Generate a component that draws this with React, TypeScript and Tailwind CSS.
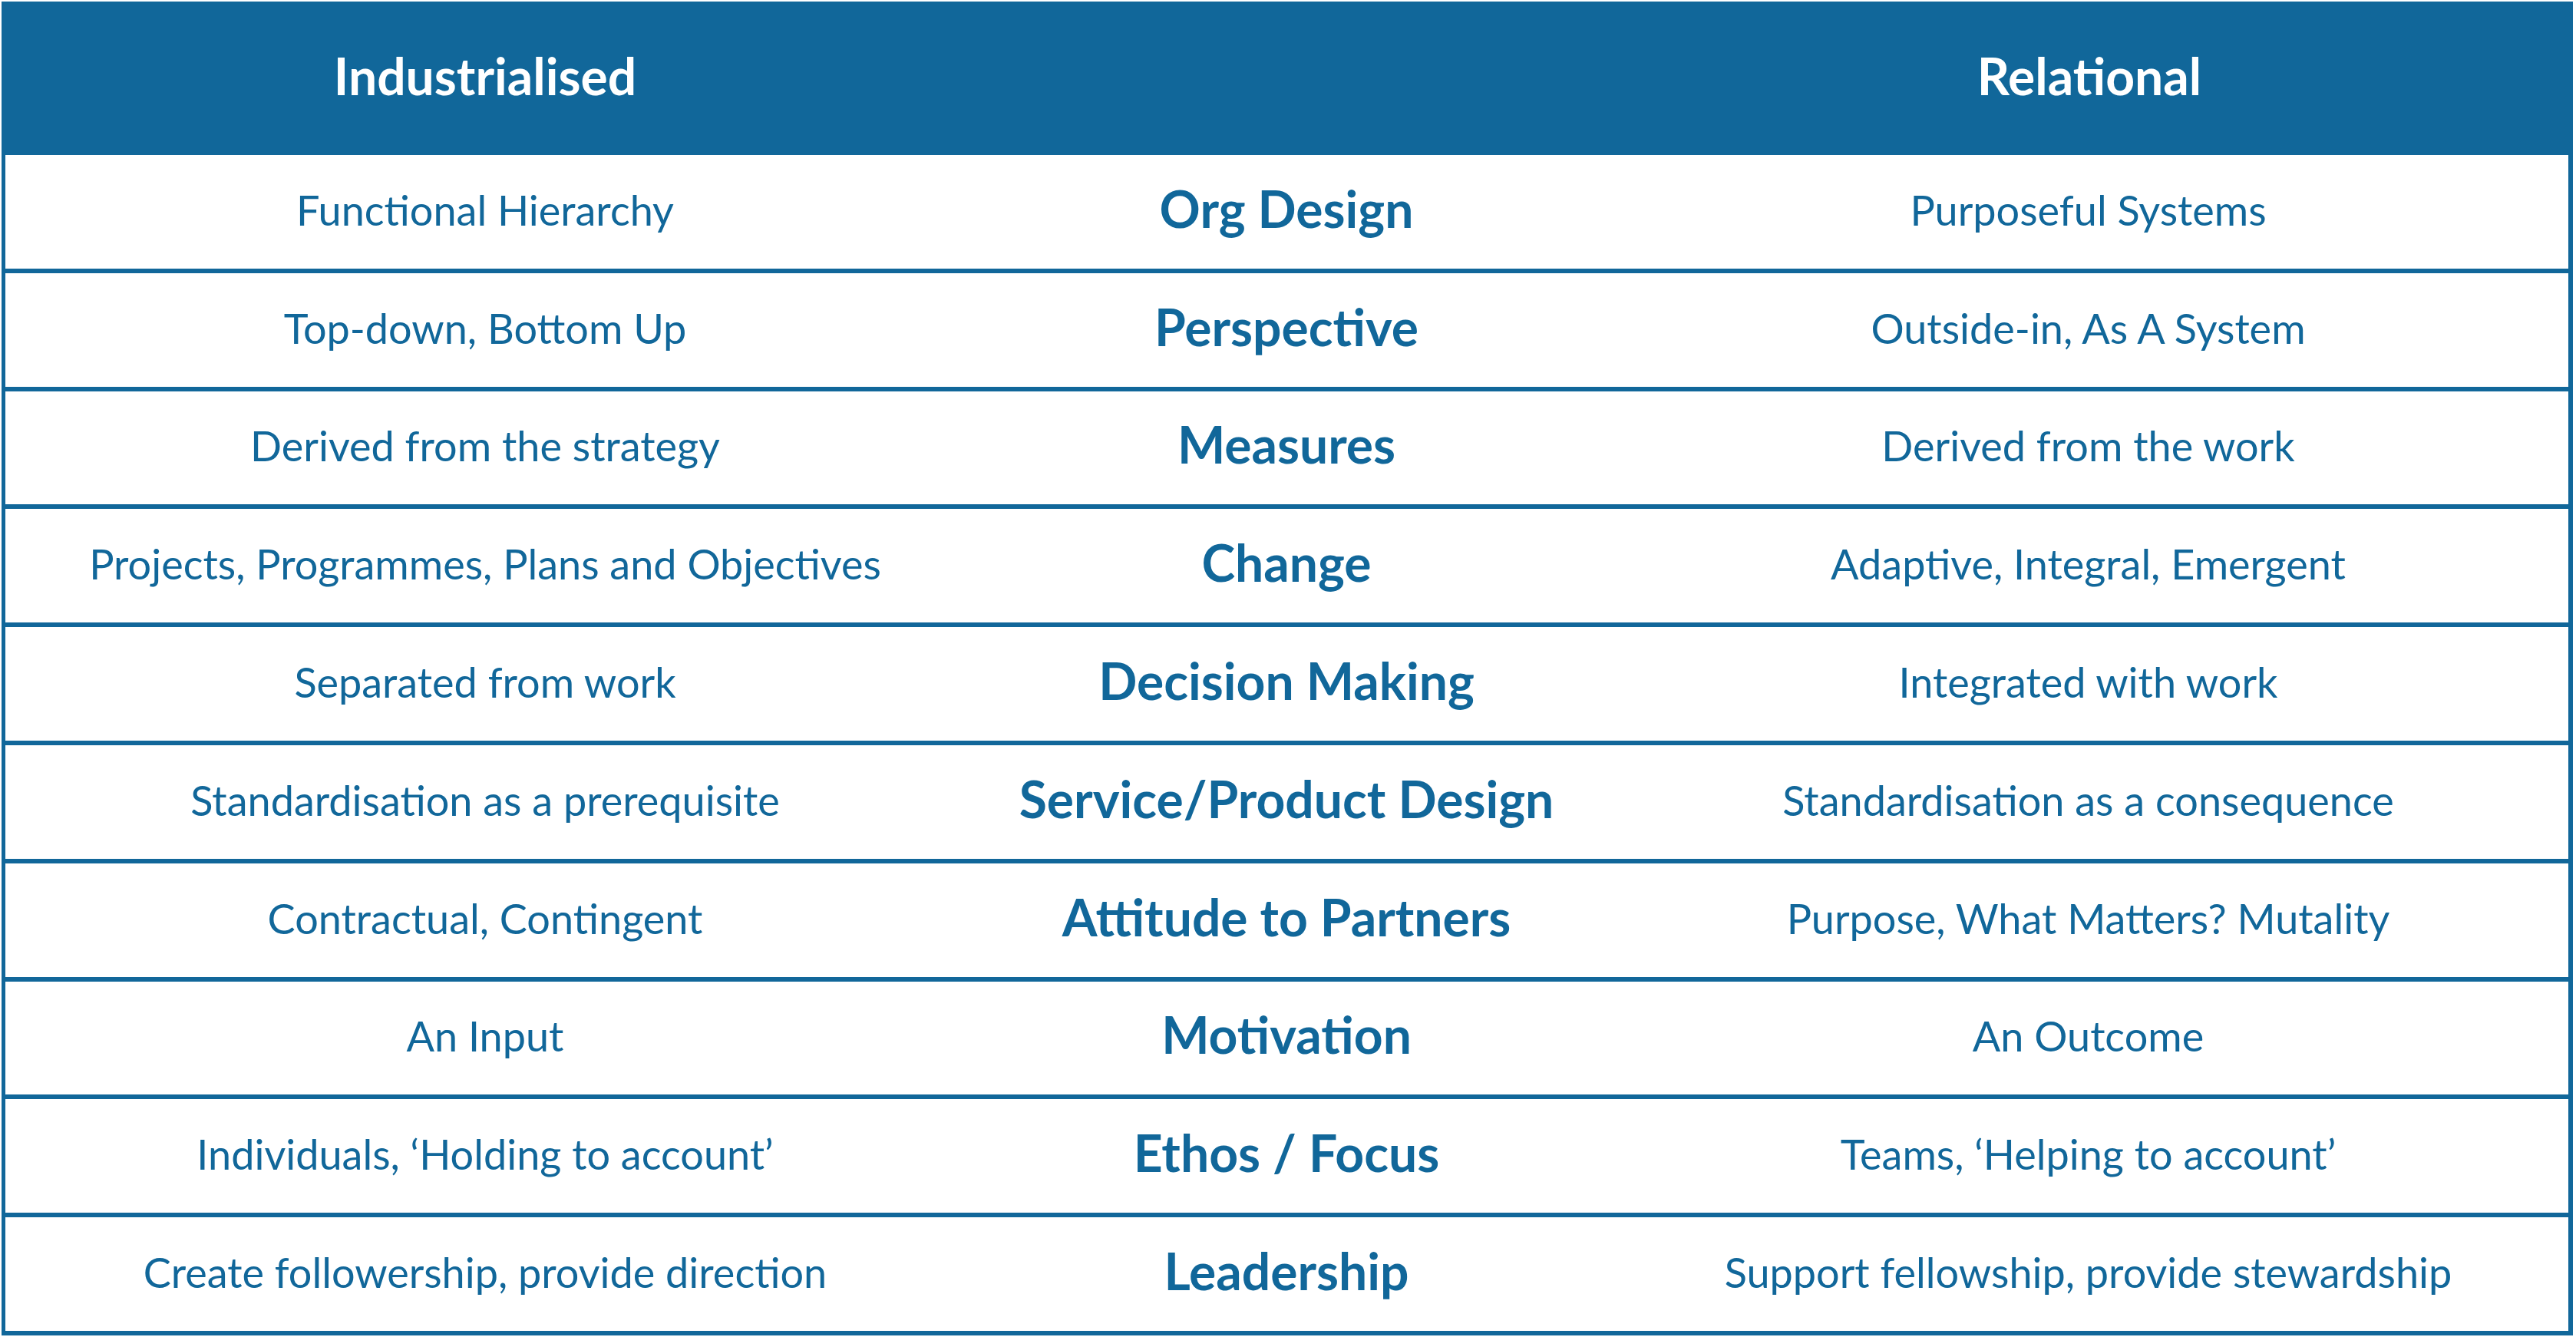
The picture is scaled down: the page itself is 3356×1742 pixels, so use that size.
import * as React from 'react';

const ROWS: [string, string, string][] = [
  ['Functional Hierarchy', 'Org Design', 'Purposeful Systems'],
  ['Top-down, Bottom Up', 'Perspective', 'Outside-in, As A System'],
  ['Derived from the strategy', 'Measures', 'Derived from the work'],
  ['Projects, Programmes, Plans and Objectives', 'Change', 'Adaptive, Integral, Emergent'],
  ['Separated from work', 'Decision Making', 'Integrated with work'],
  ['Standardisation as a prerequisite', 'Service/Product Design', 'Standardisation as a consequence'],
  ['Contractual, Contingent', 'Attitude to Partners', 'Purpose, What Matters? Mutality'],
  ['An Input', 'Motivation', 'An Outcome'],
  ['Individuals, \u2018Holding to account\u2019', 'Ethos / Focus', 'Teams, \u2018Helping to account\u2019'],
  ['Create followership, provide direction', 'Leadership', 'Support fellowship, provide stewardship'],
];

export default function App(): React.JSX.Element {
  return (
    <div className="min-h-screen bg-white pl-[2px] pt-[2px] font-['Lato',sans-serif]">
      <div className="flex h-[1738px] w-[3350px] flex-col bg-[#11679a]">
        <div className="grid h-[200px] grid-cols-[1260px_830px_1fr] items-center pb-[8px] text-center text-[66px] font-bold text-white">
          <span>Industrialised</span>
          <span />
          <span>Relational</span>
        </div>
        <div className="flex flex-1 flex-col gap-[6px] pb-[6px] pl-[5px] pr-[6px]">
          {ROWS.map(([left, mid, right]) => (
            <ComparisonRow key={mid} left={left} mid={mid} right={right} />
          ))}
        </div>
      </div>
    </div>
  );
}

function ComparisonRow({ left, mid, right }: { left: string; mid: string; right: string }): React.JSX.Element {
  return (
    <div className="grid flex-1 grid-cols-[1250px_838px_1fr] items-center bg-white pb-[4px] text-center text-[#11679a]">
      <span className="text-[54px] leading-none">{left}</span>
      <span className="mb-[4px] text-[66px] font-bold leading-none">{mid}</span>
      <span className="text-[54px] leading-none">{right}</span>
    </div>
  );
}
